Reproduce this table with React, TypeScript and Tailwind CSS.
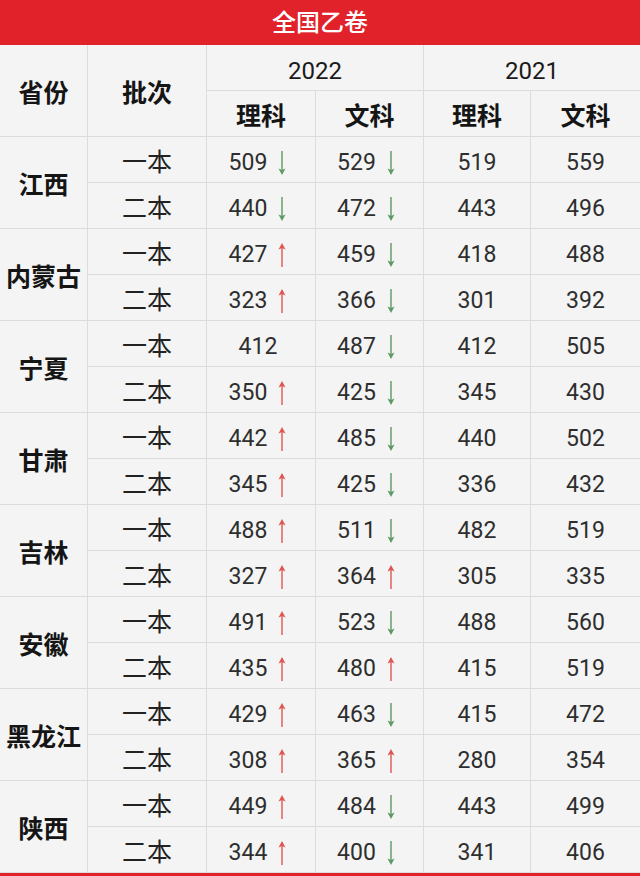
type Cell = { v: number; d?: "up" | "down" };
type Row = { batch: string; li: Cell; wen: Cell; li21: number; wen21: number };
type Province = { name: string; rows: [Row, Row] };

const provinces: Province[] = [
  {
    name: "江西",
    rows: [
      { batch: "一本", li: { v: 509, d: "down" }, wen: { v: 529, d: "down" }, li21: 519, wen21: 559 },
      { batch: "二本", li: { v: 440, d: "down" }, wen: { v: 472, d: "down" }, li21: 443, wen21: 496 },
    ],
  },
  {
    name: "内蒙古",
    rows: [
      { batch: "一本", li: { v: 427, d: "up" }, wen: { v: 459, d: "down" }, li21: 418, wen21: 488 },
      { batch: "二本", li: { v: 323, d: "up" }, wen: { v: 366, d: "down" }, li21: 301, wen21: 392 },
    ],
  },
  {
    name: "宁夏",
    rows: [
      { batch: "一本", li: { v: 412 }, wen: { v: 487, d: "down" }, li21: 412, wen21: 505 },
      { batch: "二本", li: { v: 350, d: "up" }, wen: { v: 425, d: "down" }, li21: 345, wen21: 430 },
    ],
  },
  {
    name: "甘肃",
    rows: [
      { batch: "一本", li: { v: 442, d: "up" }, wen: { v: 485, d: "down" }, li21: 440, wen21: 502 },
      { batch: "二本", li: { v: 345, d: "up" }, wen: { v: 425, d: "down" }, li21: 336, wen21: 432 },
    ],
  },
  {
    name: "吉林",
    rows: [
      { batch: "一本", li: { v: 488, d: "up" }, wen: { v: 511, d: "down" }, li21: 482, wen21: 519 },
      { batch: "二本", li: { v: 327, d: "up" }, wen: { v: 364, d: "up" }, li21: 305, wen21: 335 },
    ],
  },
  {
    name: "安徽",
    rows: [
      { batch: "一本", li: { v: 491, d: "up" }, wen: { v: 523, d: "down" }, li21: 488, wen21: 560 },
      { batch: "二本", li: { v: 435, d: "up" }, wen: { v: 480, d: "up" }, li21: 415, wen21: 519 },
    ],
  },
  {
    name: "黑龙江",
    rows: [
      { batch: "一本", li: { v: 429, d: "up" }, wen: { v: 463, d: "down" }, li21: 415, wen21: 472 },
      { batch: "二本", li: { v: 308, d: "up" }, wen: { v: 365, d: "up" }, li21: 280, wen21: 354 },
    ],
  },
  {
    name: "陕西",
    rows: [
      { batch: "一本", li: { v: 449, d: "up" }, wen: { v: 484, d: "down" }, li21: 443, wen21: 499 },
      { batch: "二本", li: { v: 344, d: "up" }, wen: { v: 400, d: "down" }, li21: 341, wen21: 406 },
    ],
  },
];

function Arrow({ dir }: { dir: "up" | "down" }) {
  if (dir === "up") {
    return (
      <svg width="10" height="26" viewBox="0 0 10 26" className="shrink-0">
        <line x1="5" y1="5" x2="5" y2="25" stroke="#e0564f" strokeWidth="1.4" />
        <path d="M5 1 L8.5 7.5 L5 6 L1.5 7.5 Z" fill="#e0564f" />
      </svg>
    );
  }
  return (
    <svg width="10" height="26" viewBox="0 0 10 26" className="shrink-0">
      <line x1="5" y1="1" x2="5" y2="21" stroke="#5b9a62" strokeWidth="1.4" />
      <path d="M5 25 L8.5 18.5 L5 20 L1.5 18.5 Z" fill="#5b9a62" />
    </svg>
  );
}

const cell = "bg-[#f4f4f4] flex items-center justify-center pt-[7px]";

function Score({ c }: { c: Cell }) {
  return (
    <div className={`${cell} gap-[10px] pr-[6px] text-[23px] text-[#2e2e2e]`}>
      <span>{c.v}</span>
      {c.d && <Arrow dir={c.d} />}
    </div>
  );
}

export default function App() {
  return (
    <div
      className="w-[640px] h-[876px] bg-white overflow-hidden"
      style={{ fontFamily: "Roboto, 'Noto Sans CJK SC', sans-serif" }}
    >
      <div className="h-[45px] bg-[#e1222b] flex items-center justify-center text-white text-[24px] font-medium">
        全国乙卷
      </div>
      <div className="bg-[#dcdcdc] pb-px grid grid-cols-[87px_118px_108px_107px_106px_109px] auto-rows-[45px] gap-px">
        <div className={`${cell} row-span-2 text-[25px] font-bold text-[#151515]`}>省份</div>
        <div className={`${cell} row-span-2 text-[25px] font-bold text-[#151515]`}>批次</div>
        <div className={`${cell} col-span-2 text-[24px] text-[#1a1a1a]`}>2022</div>
        <div className={`${cell} col-span-2 text-[24px] text-[#1a1a1a]`}>2021</div>
        <div className={`${cell} text-[25px] font-bold text-[#151515]`}>理科</div>
        <div className={`${cell} text-[25px] font-bold text-[#151515]`}>文科</div>
        <div className={`${cell} text-[25px] font-bold text-[#151515]`}>理科</div>
        <div className={`${cell} text-[25px] font-bold text-[#151515]`}>文科</div>
        {provinces.map((p) => (
          <>
            <div key={p.name} className={`${cell} row-span-2 text-[25px] font-bold text-[#151515]`}>
              {p.name}
            </div>
            {p.rows.map((r) => (
              <>
                <div className={`${cell} text-[25px] text-[#222]`}>{r.batch}</div>
                <Score c={r.li} />
                <Score c={r.wen} />
                <div className={`${cell} text-[23px] text-[#2e2e2e]`}>{r.li21}</div>
                <div className={`${cell} text-[23px] text-[#2e2e2e]`}>{r.wen21}</div>
              </>
            ))}
          </>
        ))}
      </div>
      <div className="h-[3px] bg-[#e1222b]" />
    </div>
  );
}
